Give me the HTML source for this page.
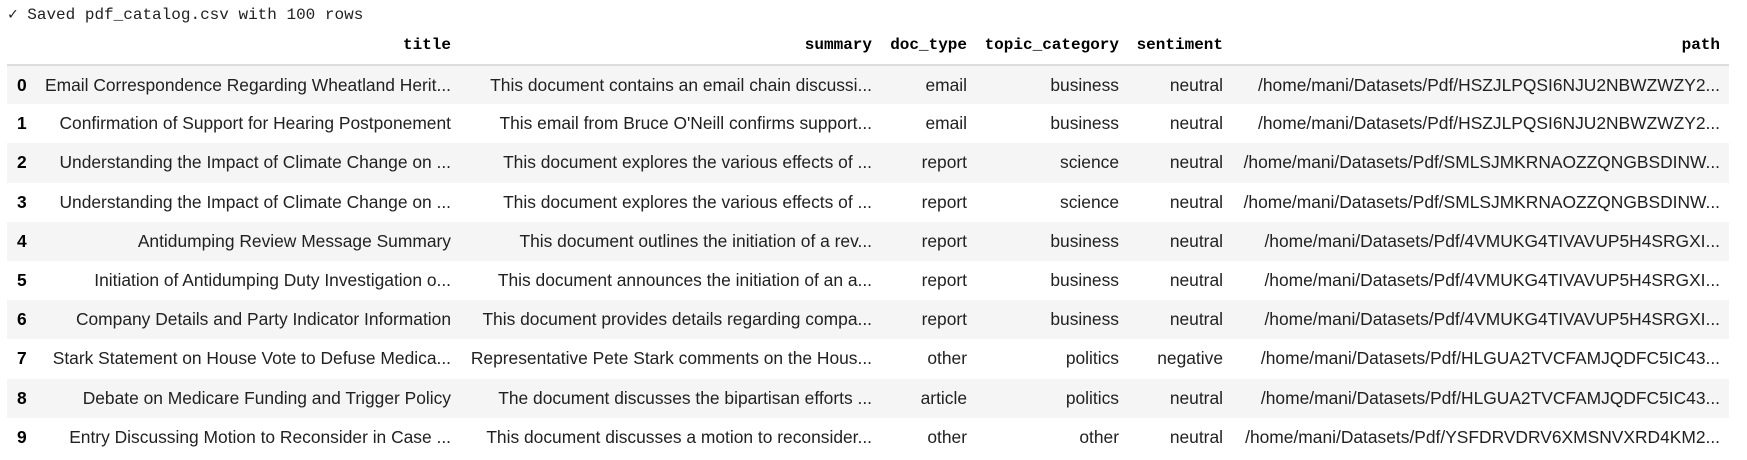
<!DOCTYPE html>
<html><head><meta charset="utf-8"><style>
body{margin:0;background:#fff;width:1747px;height:460px;overflow:hidden;font-family:"Liberation Sans",Arial,sans-serif;color:#212121}
.out{position:absolute;left:8px;top:3px;font-family:"Liberation Mono",monospace;font-size:16px;line-height:24px;color:#212121;white-space:pre}
table{position:absolute;left:7px;top:25px;border-collapse:collapse;table-layout:fixed;width:1722px}
th,td{white-space:nowrap;overflow:hidden;text-align:right;padding:0 9px 0 0;box-sizing:border-box}
th{font-family:"Liberation Mono",monospace;font-weight:bold;font-size:16px;height:40px;border-bottom:2px solid #dcdcdc;color:#000;vertical-align:middle}
td{font-size:17.4px;height:39.2px;vertical-align:middle}
tbody tr:nth-child(odd){background:#f5f5f5}
td.i{text-align:left;padding-left:10px;font-weight:bold;color:#000}
</style></head><body>
<div class="out">✓ Saved pdf_catalog.csv with 100 rows</div>
<table>
<colgroup><col style="width:27px"><col style="width:426px"><col style="width:421px"><col style="width:95px"><col style="width:152px"><col style="width:104px"><col style="width:497px"></colgroup>
<thead><tr><th></th><th>title</th><th>summary</th><th>doc_type</th><th>topic_category</th><th>sentiment</th><th>path</th></tr></thead>
<tbody>
<tr><td class="i">0</td><td>Email Correspondence Regarding Wheatland Herit...</td><td>This document contains an email chain discussi...</td><td>email</td><td>business</td><td>neutral</td><td>/home/mani/Datasets/Pdf/HSZJLPQSI6NJU2NBWZWZY2...</td></tr>
<tr><td class="i">1</td><td>Confirmation of Support for Hearing Postponement</td><td>This email from Bruce O'Neill confirms support...</td><td>email</td><td>business</td><td>neutral</td><td>/home/mani/Datasets/Pdf/HSZJLPQSI6NJU2NBWZWZY2...</td></tr>
<tr><td class="i">2</td><td>Understanding the Impact of Climate Change on ...</td><td>This document explores the various effects of ...</td><td>report</td><td>science</td><td>neutral</td><td>/home/mani/Datasets/Pdf/SMLSJMKRNAOZZQNGBSDINW...</td></tr>
<tr><td class="i">3</td><td>Understanding the Impact of Climate Change on ...</td><td>This document explores the various effects of ...</td><td>report</td><td>science</td><td>neutral</td><td>/home/mani/Datasets/Pdf/SMLSJMKRNAOZZQNGBSDINW...</td></tr>
<tr><td class="i">4</td><td>Antidumping Review Message Summary</td><td>This document outlines the initiation of a rev...</td><td>report</td><td>business</td><td>neutral</td><td>/home/mani/Datasets/Pdf/4VMUKG4TIVAVUP5H4SRGXI...</td></tr>
<tr><td class="i">5</td><td>Initiation of Antidumping Duty Investigation o...</td><td>This document announces the initiation of an a...</td><td>report</td><td>business</td><td>neutral</td><td>/home/mani/Datasets/Pdf/4VMUKG4TIVAVUP5H4SRGXI...</td></tr>
<tr><td class="i">6</td><td>Company Details and Party Indicator Information</td><td>This document provides details regarding compa...</td><td>report</td><td>business</td><td>neutral</td><td>/home/mani/Datasets/Pdf/4VMUKG4TIVAVUP5H4SRGXI...</td></tr>
<tr><td class="i">7</td><td>Stark Statement on House Vote to Defuse Medica...</td><td>Representative Pete Stark comments on the Hous...</td><td>other</td><td>politics</td><td>negative</td><td>/home/mani/Datasets/Pdf/HLGUA2TVCFAMJQDFC5IC43...</td></tr>
<tr><td class="i">8</td><td>Debate on Medicare Funding and Trigger Policy</td><td>The document discusses the bipartisan efforts ...</td><td>article</td><td>politics</td><td>neutral</td><td>/home/mani/Datasets/Pdf/HLGUA2TVCFAMJQDFC5IC43...</td></tr>
<tr><td class="i">9</td><td>Entry Discussing Motion to Reconsider in Case ...</td><td>This document discusses a motion to reconsider...</td><td>other</td><td>other</td><td>neutral</td><td>/home/mani/Datasets/Pdf/YSFDRVDRV6XMSNVXRD4KM2...</td></tr>
</tbody></table>
</body></html>
